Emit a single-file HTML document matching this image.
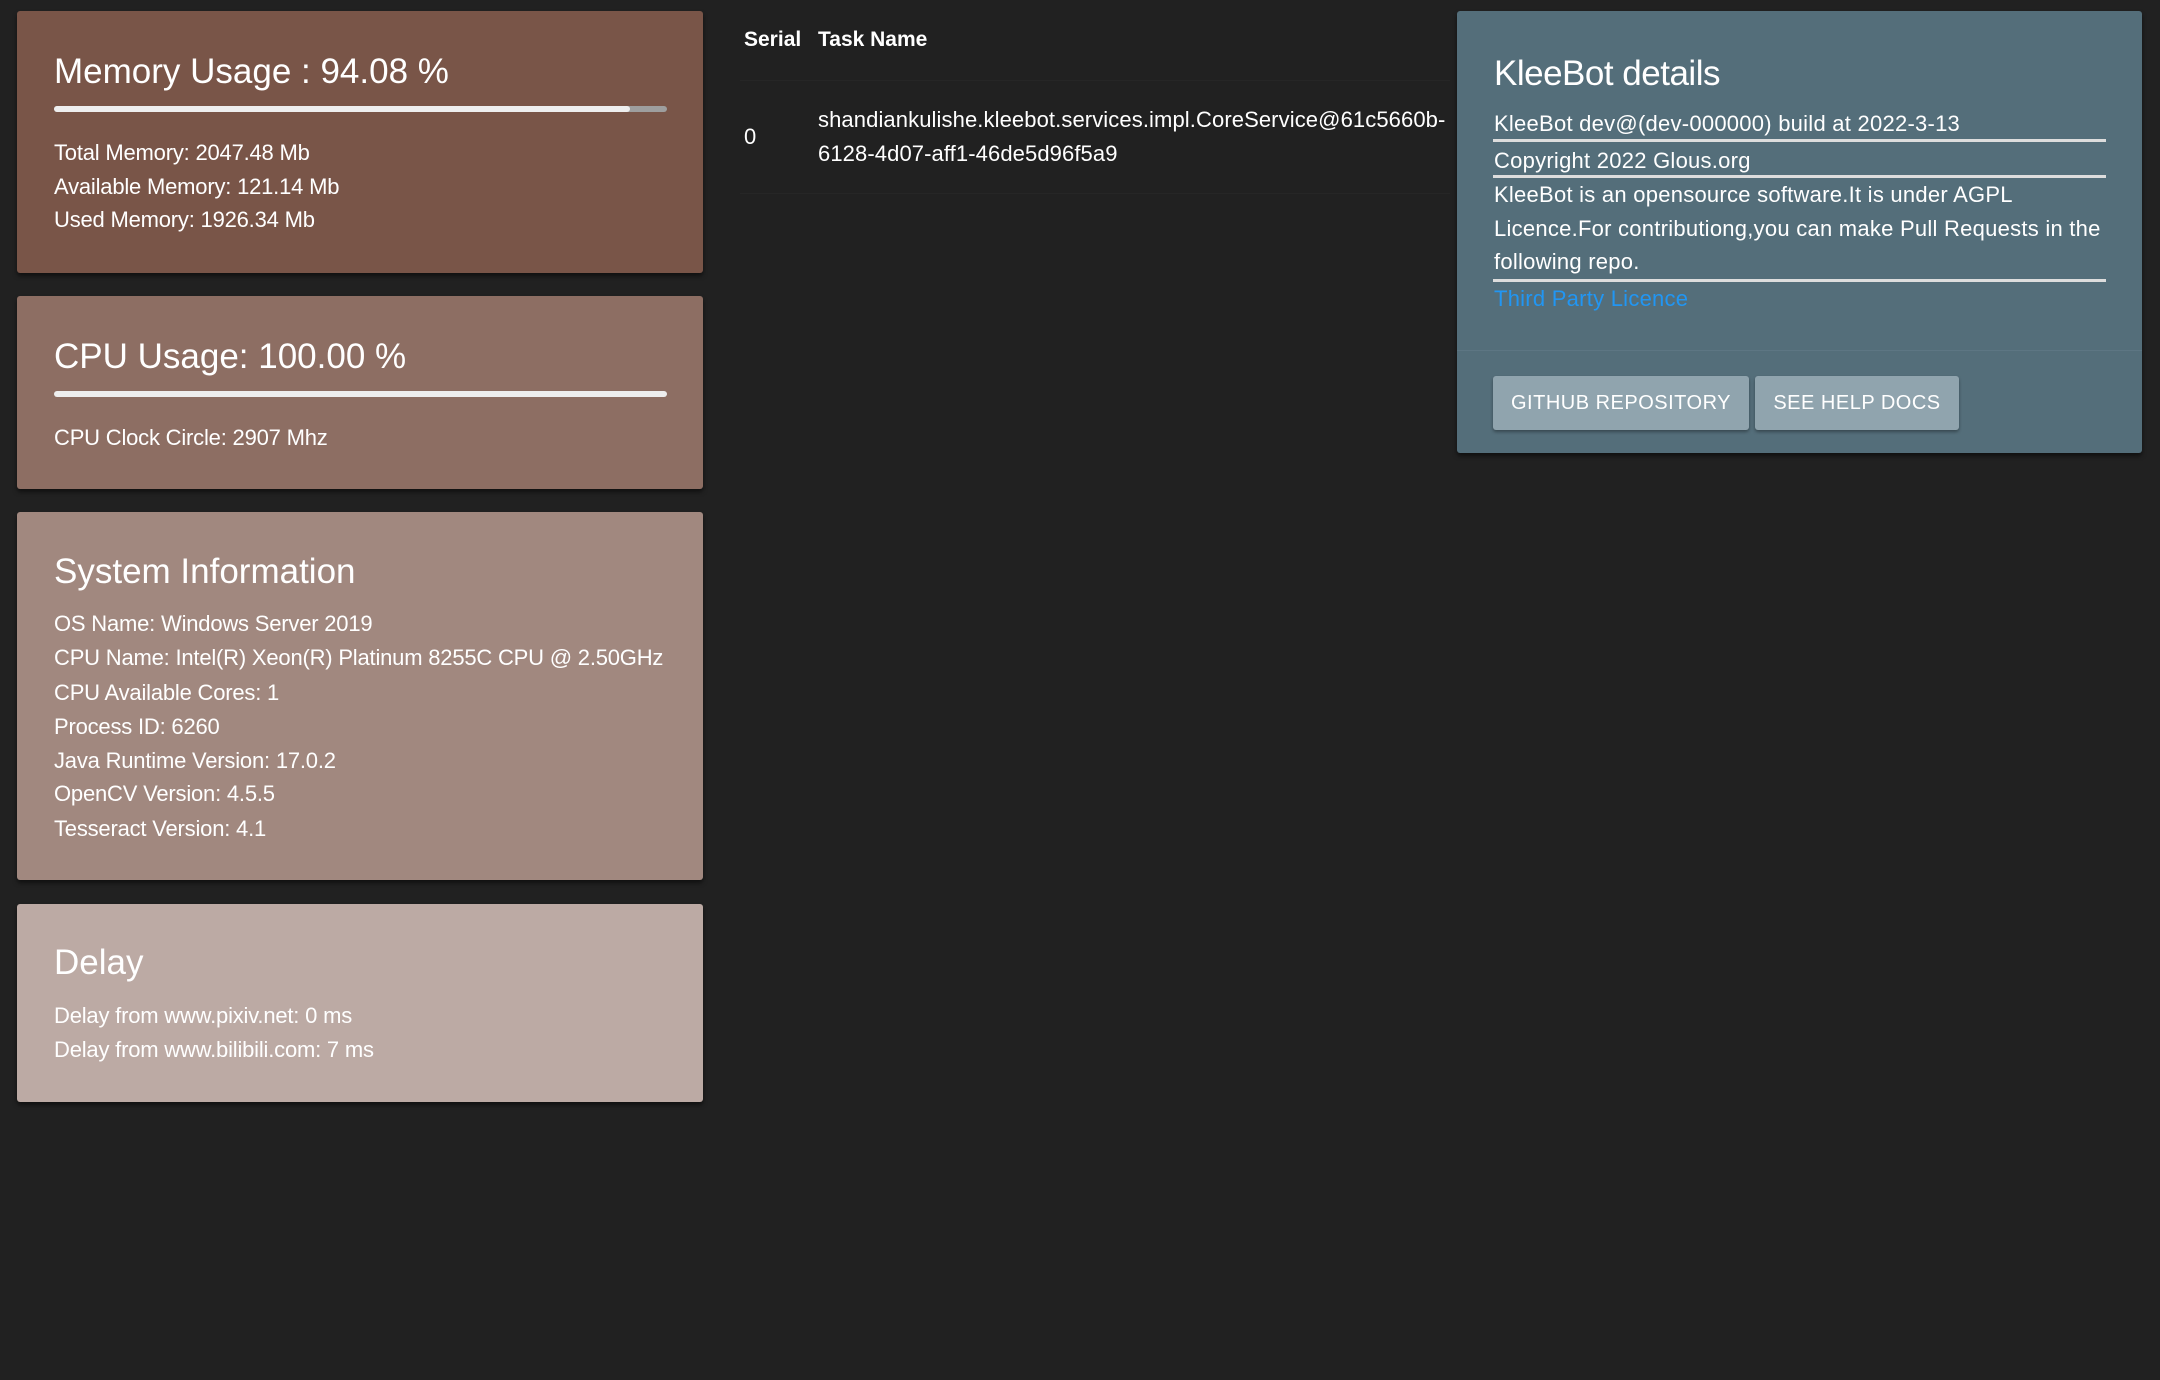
<!DOCTYPE html>
<html><head><meta charset="utf-8"><style>
*{margin:0;padding:0;box-sizing:border-box}
body{width:2160px;height:1380px;background:#212121;font-family:"Liberation Sans",sans-serif;color:#fff;position:relative;overflow:hidden}
.card{position:absolute;left:17px;width:686px;border-radius:3px;box-shadow:0 3px 4px rgba(0,0,0,.5)}
.t{position:absolute;left:37px;white-space:nowrap}
.h{font-size:35px;line-height:40px}
.b{font-size:22px;line-height:30px;letter-spacing:-0.2px}
.bar{position:absolute;left:37px;width:613px;height:6px;border-radius:3px;background:#eee}
.r{position:absolute;white-space:nowrap}
.btn{position:absolute;top:376px;height:54px;background:#90a4ae;border-radius:3px;box-shadow:0 2px 3px rgba(0,0,0,.35);font-size:20px;line-height:54px;text-align:center;color:#fff;letter-spacing:0.5px}
.ul{position:absolute;left:36px;width:613px;height:3px;background:#ddd}
.k{letter-spacing:0.25px}
</style></head><body>

<div class="card" style="top:11px;height:262px;background:#795548">
  <div class="t h" style="top:41px">Memory Usage : 94.08 %</div>
  <div class="bar" style="top:95px;background:#9e9e9e"><div style="width:94%;height:6px;background:#eee;border-radius:3px"></div></div>
  <div class="t b" style="top:127px">Total Memory: 2047.48 Mb</div>
  <div class="t b" style="top:161px">Available Memory: 121.14 Mb</div>
  <div class="t b" style="top:194px">Used Memory: 1926.34 Mb</div>
</div>

<div class="card" style="top:296px;height:193px;background:#8d6e63">
  <div class="t h" style="top:41px">CPU Usage: 100.00 %</div>
  <div class="bar" style="top:95px"></div>
  <div class="t b" style="top:127px">CPU Clock Circle: 2907 Mhz</div>
</div>

<div class="card" style="top:512px;height:368px;background:#a1887f">
  <div class="t h" style="top:40px">System Information</div>
  <div class="t b" style="top:97px">OS Name: Windows Server 2019</div>
  <div class="t b" style="top:131px">CPU Name: Intel(R) Xeon(R) Platinum 8255C CPU @ 2.50GHz</div>
  <div class="t b" style="top:166px">CPU Available Cores: 1</div>
  <div class="t b" style="top:200px">Process ID: 6260</div>
  <div class="t b" style="top:234px">Java Runtime Version: 17.0.2</div>
  <div class="t b" style="top:267px">OpenCV Version: 4.5.5</div>
  <div class="t b" style="top:302px">Tesseract Version: 4.1</div>
</div>

<div class="card" style="top:904px;height:198px;background:#bcaaa4">
  <div class="t h" style="top:39px">Delay</div>
  <div class="t b" style="top:97px">Delay from www.pixiv.net: 0 ms</div>
  <div class="t b" style="top:131px">Delay from www.bilibili.com: 7 ms</div>
</div>

<div class="r" style="left:744px;top:27px;font-size:21px;font-weight:bold;line-height:26px">Serial</div>
<div class="r" style="left:818px;top:27px;font-size:21px;font-weight:bold;line-height:26px">Task Name</div>
<div style="position:absolute;left:740px;top:80px;width:710px;height:1px;background:#262626"></div>
<div class="r b" style="left:744px;top:122px">0</div>
<div class="r b" style="left:818px;top:105px;letter-spacing:0.1px">shandiankulishe.kleebot.services.impl.CoreService@61c5660b-</div>
<div class="r b" style="left:818px;top:139px;letter-spacing:0.1px">6128-4d07-aff1-46de5d96f5a9</div>
<div style="position:absolute;left:740px;top:193px;width:710px;height:1px;background:#262626"></div>

<div style="position:absolute;left:1457px;top:11px;width:685px;height:442px;background:#546e7a;border-radius:3px;box-shadow:0 3px 4px rgba(0,0,0,.5)">
  <div class="t" style="top:42px;font-size:35px;line-height:42px;font-weight:300;letter-spacing:-0.5px">KleeBot details</div>
  <div class="t b k" style="top:98px">KleeBot dev@(dev-000000) build at 2022-3-13</div>
  <div class="ul" style="top:128px"></div>
  <div class="t b k" style="top:135px">Copyright 2022 Glous.org</div>
  <div class="ul" style="top:164px"></div>
  <div class="t b k" style="top:169px">KleeBot is an opensource software.It is under AGPL</div>
  <div class="t b k" style="top:203px">Licence.For contributiong,you can make Pull Requests in the</div>
  <div class="t b k" style="top:236px">following repo.</div>
  <div class="ul" style="top:268px"></div>
  <div class="t b k" style="top:273px;color:#2196f3">Third Party Licence</div>
  <div style="position:absolute;left:0;top:339px;width:685px;height:1px;background:#5d7683"></div>
</div>
<div class="btn" style="left:1493px;width:256px">GITHUB REPOSITORY</div>
<div class="btn" style="left:1755px;width:204px">SEE HELP DOCS</div>

</body></html>
